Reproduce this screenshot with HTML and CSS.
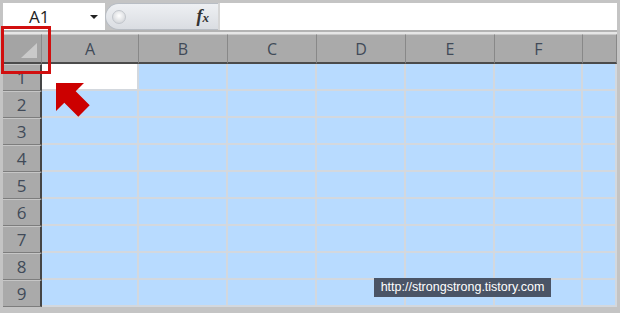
FILE: index.html
```html
<!DOCTYPE html>
<html lang="en">
<head>
    <meta charset="UTF-8">
    <meta name="viewport" content="width=device-width, initial-scale=1.0">
    <title>Select All</title>
    <link rel="stylesheet" href="styles.css">
</head>
<body>
    <div class="window">
        <div class="formula-bar">
            <div class="name-box">
                <span class="cell-ref">A1</span>
                <span class="drop"></span>
            </div>
            <div class="fx-pill">
                <span class="grip"></span>
                <span class="fx">f<span class="fx-x">x</span></span>
            </div>
            <div class="formula-input"></div>
        </div>

        <div class="sheet">
            <div class="corner"><span class="corner-tri"></span></div>
            <div class="col-head">A</div>
            <div class="col-head">B</div>
            <div class="col-head">C</div>
            <div class="col-head">D</div>
            <div class="col-head">E</div>
            <div class="col-head">F</div>
            <div class="col-head"></div>

            <div class="row-head">1</div>
            <div class="cell active"></div><div class="cell"></div><div class="cell"></div><div class="cell"></div><div class="cell"></div><div class="cell"></div><div class="cell"></div>
            <div class="row-head">2</div>
            <div class="cell"></div><div class="cell"></div><div class="cell"></div><div class="cell"></div><div class="cell"></div><div class="cell"></div><div class="cell"></div>
            <div class="row-head">3</div>
            <div class="cell"></div><div class="cell"></div><div class="cell"></div><div class="cell"></div><div class="cell"></div><div class="cell"></div><div class="cell"></div>
            <div class="row-head">4</div>
            <div class="cell"></div><div class="cell"></div><div class="cell"></div><div class="cell"></div><div class="cell"></div><div class="cell"></div><div class="cell"></div>
            <div class="row-head">5</div>
            <div class="cell"></div><div class="cell"></div><div class="cell"></div><div class="cell"></div><div class="cell"></div><div class="cell"></div><div class="cell"></div>
            <div class="row-head">6</div>
            <div class="cell"></div><div class="cell"></div><div class="cell"></div><div class="cell"></div><div class="cell"></div><div class="cell"></div><div class="cell"></div>
            <div class="row-head">7</div>
            <div class="cell"></div><div class="cell"></div><div class="cell"></div><div class="cell"></div><div class="cell"></div><div class="cell"></div><div class="cell"></div>
            <div class="row-head">8</div>
            <div class="cell"></div><div class="cell"></div><div class="cell"></div><div class="cell"></div><div class="cell"></div><div class="cell"></div><div class="cell"></div>
            <div class="row-head">9</div>
            <div class="cell"></div><div class="cell"></div><div class="cell"></div><div class="cell"></div><div class="cell"></div><div class="cell"></div><div class="cell"></div>
        </div>

        <!-- callouts drawn over the sheet -->
        <div class="select-box"></div>
        <svg class="arrow" width="45" height="42" viewBox="0 0 45 42">
            <polygon points="6,5 34,5 25.7,13.3 39.7,27.3 28.3,38.7 14.3,24.7 6,33" fill="#cc0000"/>
        </svg>
        <div class="watermark">http://strongstrong.tistory.com</div>
    </div>
</body>
</html>
```

FILE: styles.css
```css
body {
    margin: 0;
    padding: 0;
    background-color: #c4c4c4;
    font-family: "Open Sans", "Liberation Sans", sans-serif;
}

.window {
    position: relative;
    width: 620px;
    height: 313px;
    padding: 3px 3px 0 3px;
    box-sizing: border-box;
    background-color: #c4c4c4;
    overflow: hidden;
}

.formula-bar {
    display: flex;
    height: 27px;
    border-bottom: 2px solid #b3b3b3;
    box-shadow: 0 2px 0 #e6e6e6;
    margin-bottom: 2px;
}

.name-box {
    width: 102px;
    background-color: #fff;
    display: flex;
    align-items: center;
    box-sizing: border-box;
    padding-left: 26px;
}

.cell-ref {
    font-size: 17px;
    color: #1e1e1e;
    width: 61px;
}

.drop {
    width: 0;
    height: 0;
    border-left: 4px solid transparent;
    border-right: 4px solid transparent;
    border-top: 4px solid #222;
    margin-top: 1px;
}

.fx-pill {
    width: 113px;
    box-sizing: border-box;
    background: linear-gradient(#eef0f3, #dadde2);
    border: 1px solid #b8bdc4;
    border-right: none;
    border-radius: 14px 0 0 14px;
    display: flex;
    align-items: center;
    justify-content: space-between;
    padding: 0 9px 0 6px;
}

.grip {
    width: 12px;
    height: 12px;
    border-radius: 50%;
    background: radial-gradient(circle at 50% 40%, #ffffff, #c9ccd1);
    border: 1px solid #c2c6cc;
}

.fx {
    font-family: "Liberation Serif", serif;
    font-style: italic;
    font-weight: bold;
    font-size: 18px;
    color: #333;
}

.fx-x {
    font-size: 13px;
}

.formula-input {
    flex: 1;
    background-color: #fff;
    border-left: 2px solid #d6d6d6;
}

.sheet {
    display: grid;
    grid-template-columns: 39px 97px 89px 89px 89px 89px 88px 34px;
    grid-template-rows: 30px repeat(9, 27px);
}

.sheet > div {
    box-sizing: border-box;
}

.corner {
    position: relative;
    background-color: #a4a4a4;
    border-top: 1px solid #c9c9c9;
    border-right: 1px solid #8a8a8a;
    border-bottom: 2px solid #4b4b4b;
}

.corner-tri {
    position: absolute;
    right: 4px;
    bottom: 4px;
    width: 0;
    height: 0;
    border-left: 16px solid transparent;
    border-bottom: 15px solid #cacaca;
}

.col-head {
    background-color: #aaaaaa;
    border-top: 1px solid #c9c9c9;
    border-right: 1px solid #888;
    border-bottom: 2px solid #4b4b4b;
    color: #414a58;
    font-size: 16px;
    display: flex;
    align-items: center;
    justify-content: center;
}

.row-head {
    background-color: #aaaaaa;
    border-top: 1px solid #c6c6c6;
    border-bottom: 1px solid #7d7d7d;
    border-right: 2px solid #454545;
    color: #414a58;
    font-size: 17px;
    display: flex;
    align-items: center;
    justify-content: center;
}

.cell {
    background-color: #b8dbff;
    border-right: 2px solid #d3d8de;
    border-bottom: 2px solid #d3d8de;
}

.cell.active {
    background-color: #fff;
}

.select-box {
    position: absolute;
    left: 1px;
    top: 26px;
    width: 50px;
    height: 48px;
    box-sizing: border-box;
    border: 3px solid #d10f0f;
}

.arrow {
    position: absolute;
    left: 50px;
    top: 78px;
}

.watermark {
    position: absolute;
    left: 374px;
    top: 278px;
    width: 177px;
    height: 19px;
    background-color: #4a5466;
    color: #fff;
    font-family: "Liberation Sans", sans-serif;
    font-size: 12.5px;
    line-height: 19px;
    text-align: center;
}
```
